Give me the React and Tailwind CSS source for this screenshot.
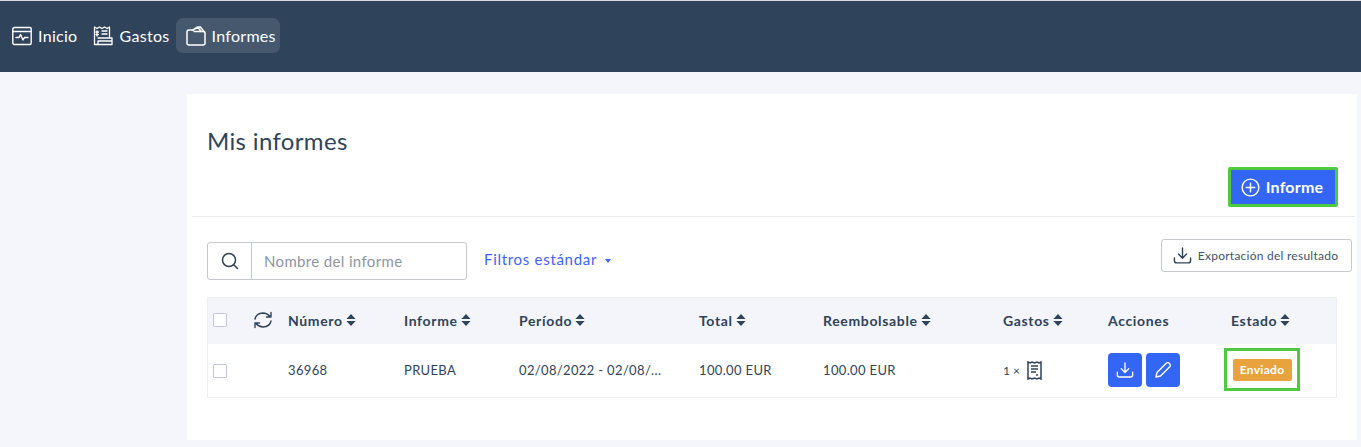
import React from "react";

const Sort = () => (
  <svg width="10" height="14" viewBox="0 0 10 14" className="ml-[3px] inline-block shrink-0" fill="#2f4459">
    <path d="M5 1 L9.6 6 H0.4 Z" />
    <path d="M5 13 L9.6 8 H0.4 Z" />
  </svg>
);

const Head = ({ children, sort = true }) => (
  <div className="flex items-center text-[14px] font-bold text-[#2f4459] tracking-[0.65px]">
    {children}
    {sort && <Sort />}
  </div>
);

const Cell = ({ children }) => (
  <div className="flex items-center text-[13px] text-[#2f4459] tracking-[0.35px] whitespace-nowrap">{children}</div>
);

const Box = () => <div className="h-[14px] w-[14px] border border-[#c3c8d9] bg-white rounded-[1px]" />;

const DownloadIcon = ({ size = 20, color = "white" }) => (
  <svg width={size} height={size} viewBox="0 0 20 20" fill="none" stroke={color} strokeWidth="1.5" strokeLinecap="round" strokeLinejoin="round">
    <path d="M10 2 V12.5 M5.8 8.5 L10 12.8 L14.2 8.5" />
    <path d="M1.5 12.5 V15.5 Q1.5 17.8 4 17.8 H16 Q18.5 17.8 18.5 15.5 V12.5" />
  </svg>
);

const NavItem = ({ icon, label, active, className }) => (
  <div className={`flex h-[35px] items-center gap-[6px] rounded-[7px] ${active ? "bg-[#46586d]" : ""} ${className}`}>
    {icon}
    <span className="text-[16px] font-normal text-white tracking-[0.3px]">{label}</span>
  </div>
);

export default function App() {
  return (
    <div className="flex h-[447px] w-[1361px] flex-col overflow-hidden bg-[#f4f6fb] font-['Lato',sans-serif]">
      <div className="h-px bg-[#d8dadd]" />
      <nav className="flex h-[71px] items-center bg-[#2f445b] pb-[2px] pl-[2px]">
        <NavItem
          className="pl-[10px] pr-[8px]"
          label="Inicio"
          icon={
            <svg width="20" height="20" viewBox="0 0 20 20" fill="none" stroke="white" strokeWidth="1.4" strokeLinejoin="round" strokeLinecap="round">
              <rect x="0.8" y="1.5" width="18.4" height="17" rx="1.5" />
              <path d="M1 5.5 H19" />
              <path d="M4 11.5 H7 L8.5 8.5 L11 14 L12.5 11.5 H16" />
            </svg>
          }
        />
        <NavItem
          className="pl-[8px] pr-[6px]"
          label="Gastos"
          icon={
            <svg width="20" height="20" viewBox="0 0 20 20" fill="none" stroke="white" strokeWidth="1.3" strokeLinejoin="round" strokeLinecap="round">
              <path d="M1.5 14 V1 L4 2.5 L6.5 1 L9 2.5 L11.5 1 L14 2.5 L16.5 1 V11" />
              <path d="M4 5 V10 M3 6 H5.5 M3 8.5 H5.5 M9 5 H14 M9 8 H14" />
              <path d="M5 12 H19 V15 H5 V18.5 H1.5 V14 M5 18.5 H19 V15" />
            </svg>
          }
        />
        <NavItem
          active
          className="pl-[10px] pr-[4px]"
          label="Informes"
          icon={
            <svg width="20" height="20" viewBox="0 0 20 20" fill="none" stroke="white" strokeWidth="1.5" strokeLinejoin="round" strokeLinecap="round">
              <path d="M7 4 H3 Q1 4 1 6 V17 Q1 19 3 19 H17 Q19 19 19 17 V7 Q19 5.5 17 5.5 H8" />
              <path d="M7 4 L11.7 1 L15 5.5 M14.3 1 L18 5.5 M11.7 1 H14.3" />
            </svg>
          }
        />
      </nav>

      <main className="mt-[22px] ml-[187px] mr-[4px] h-[346px] bg-white">
        <div className="px-[20px] pt-[32px]">
          <h1 className="text-[24px] leading-[30px] font-normal tracking-[0.35px] text-[#2f4459]">Mis informes</h1>
        </div>
        <div className="mt-[10px] ml-[5px] mr-[2px] flex h-[51px] justify-end border-b border-[#e9ebf0] pt-[1px]">
          <div className="mr-[17px] box-border flex h-[40px] w-[110px] items-center justify-center gap-[6px] rounded-[2px] border-[3px] border-[#4fc93f] bg-[#3366f5] pr-[2px]">
            <svg width="19" height="19" viewBox="0 0 20 20" fill="none" stroke="white" strokeWidth="1.5" strokeLinecap="round">
              <circle cx="10" cy="10" r="8.8" />
              <path d="M10 5.5 V14.5 M5.5 10 H14.5" />
            </svg>
            <span className="text-[16px] font-bold text-white tracking-[0.2px]">Informe</span>
          </div>
        </div>

        <div className="mt-[22px] flex items-start pl-[20px] pr-[5px]">
          <div className="mt-[3px] flex h-[38px] w-[260px] overflow-hidden rounded-[3px] border border-[#c6c9cf]">
            <div className="flex w-[44px] items-center justify-center border-r border-[#c6c9cf]">
              <svg width="18" height="18" viewBox="0 0 18 18" fill="none" stroke="#2f4459" strokeWidth="1.5" strokeLinecap="round">
                <circle cx="8" cy="8" r="6.5" />
                <path d="M13 13 L16.5 16.5" />
              </svg>
            </div>
            <div className="flex flex-1 items-center pl-[12px] text-[15px] tracking-[0.35px] text-[#8f959e]">Nombre del informe</div>
          </div>
          <div className="mt-[3px] ml-[17px] flex h-[35px] items-center gap-[8px] text-[15px] tracking-[0.7px] text-[#3f63f5]">
            Filtros estándar
            <svg width="6" height="4" viewBox="0 0 6 4" fill="#3f63f5" className="mt-[2px]"><path d="M0 0 H6 L3 4 Z" /></svg>
          </div>
          <div className="ml-auto flex h-[33px] w-[191px] items-center justify-center gap-[6px] rounded-[3px] border border-[#c6c9cf] pr-[2px] text-[12px] tracking-[0.25px] text-[#42556a]">
            <DownloadIcon size={19} color="#2f4459" />
            Exportación del resultado
          </div>
        </div>

        <div className="mt-[17px] ml-[20px] mr-[20px] box-border border border-[#eef0f5]">
          <div className="grid h-[46px] grid-cols-[45px_35px_116px_115px_180px_124px_180px_105px_123px_1fr] items-center bg-[#f3f5fa] pb-[2px]">
            <div className="pl-[5px]"><Box /></div>
            <div>
              <svg width="20" height="18" viewBox="0 0 20 18" fill="none" stroke="#2f4459" strokeWidth="1.4" strokeLinecap="round" strokeLinejoin="round">
                <path d="M2 8 Q3 2.5 10 2 Q14 2 17 5.5 M18 1.5 V6 H13.5" />
                <path d="M18 10 Q17 15.5 10 16 Q6 16 3 12.5 M2 16.5 V12 H6.5" />
              </svg>
            </div>
            <Head>Número</Head>
            <Head>Informe</Head>
            <Head>Período</Head>
            <Head>Total</Head>
            <Head>Reembolsable</Head>
            <Head>Gastos</Head>
            <Head sort={false}>Acciones</Head>
            <Head>Estado</Head>
          </div>
          <div className="grid h-[53px] grid-cols-[45px_35px_116px_115px_180px_124px_180px_105px_123px_1fr] items-center">
            <div className="pl-[5px]"><Box /></div>
            <div />
            <Cell>36968</Cell>
            <Cell>PRUEBA</Cell>
            <Cell>02/08/2022 - 02/08/...</Cell>
            <Cell>100.00 EUR</Cell>
            <Cell>100.00 EUR</Cell>
            <div className="flex items-center gap-[7px] text-[12px] text-[#2f4459]">
              <span>1 ×</span>
              <svg width="15" height="19" viewBox="0 0 15 19" fill="none" stroke="#2f4459" strokeWidth="1.5">
                <path d="M1 1 L3 2 L5 1 L7.5 2 L10 1 L12 2 L14 1 V18 L12 17 L10 18 L7.5 17 L5 18 L3 17 L1 18 Z" />
                <path d="M4 5 H11 M4 8 H11 M4 11 H9 M9 14 H11" />
              </svg>
            </div>
            <div className="flex gap-[4px] pb-[1px]">
              <div className="flex h-[34px] w-[34px] items-center justify-center rounded-[4px] bg-[#3366f5]"><DownloadIcon size={18} /></div>
              <div className="flex h-[34px] w-[34px] items-center justify-center rounded-[4px] bg-[#3366f5]">
                <svg width="18" height="18" viewBox="0 0 18 18" fill="none" stroke="white" strokeWidth="1.4" strokeLinejoin="round">
                  <path d="M2 16 L3 11.5 L12.5 2 Q14 1 15.5 2.5 Q17 4 16 5.5 L6.5 15 Z" />
                </svg>
              </div>
            </div>
            <div className="-ml-[7px] mb-[2px] box-border flex h-[43px] w-[76px] items-center justify-center border-[3px] border-[#4fc93f]">
              <div className="flex h-[22px] w-[59px] items-center justify-center rounded-[2px] bg-[#e8a33f] text-[12px] font-bold tracking-[0.3px] text-white">Enviado</div>
            </div>
          </div>
        </div>
      </main>
    </div>
  );
}
